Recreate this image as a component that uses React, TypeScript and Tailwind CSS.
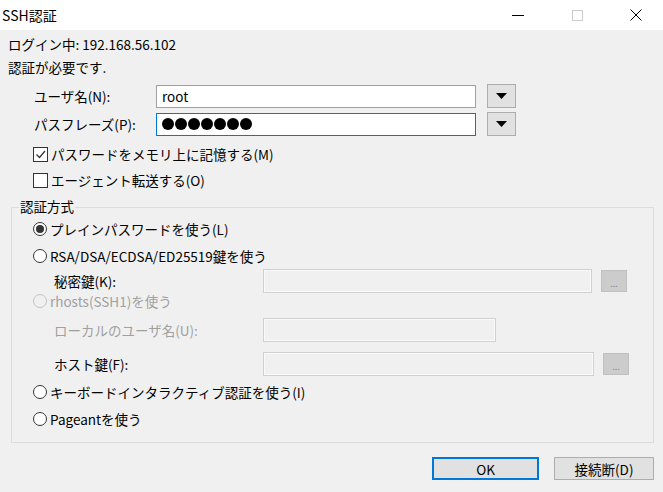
import React from 'react';

const font = '[font-family:"Noto_Sans_CJK_JP","Noto_Sans",sans-serif]';

function Radio({ checked = false, disabled = false }: { checked?: boolean; disabled?: boolean }) {
  return (
    <span
      className={`flex h-[14px] w-[14px] shrink-0 items-center justify-center rounded-full border ${
        disabled ? 'border-[#c4c4c4] bg-[#f0f0f0]' : 'border-[#333333] bg-white'
      }`}
    >
      {checked && <span className="h-[8px] w-[8px] rounded-full bg-[#333333]" />}
    </span>
  );
}

function Check({ checked = false }: { checked?: boolean }) {
  return (
    <span className="flex h-[15px] w-[15px] shrink-0 items-center justify-center border border-[#333333] bg-white">
      {checked && (
        <svg viewBox="0 0 13 13" className="h-[13px] w-[13px]">
          <polyline points="2.5,6.5 5.5,9.5 11,3" fill="none" stroke="#333333" strokeWidth="1.3" />
        </svg>
      )}
    </span>
  );
}

function DropButton() {
  return (
    <div className="ml-[11px] flex h-[24px] w-[29px] items-center justify-center border border-[#adadad] bg-[#e1e1e1]">
      <svg viewBox="0 0 11 6" className="h-[6px] w-[11px]">
        <polygon points="0,0 11,0 5.5,6" fill="#000000" />
      </svg>
    </div>
  );
}

function DotsButton() {
  return (
    <div className="ml-[9px] flex h-[22px] w-[26px] items-end justify-center border border-[#c0c0c0] bg-[#cccccc] pb-[3px] text-[9px] leading-[9px] text-[#8a8a8a]">
      ...
    </div>
  );
}

export default function App() {
  return (
    <div className={`h-[492px] w-[663px] overflow-hidden bg-[#f0f0f0] text-[13.5px] text-black ${font}`}>
      {/* title bar */}
      <div className="flex h-[30px] items-center bg-white pr-[21px]">
        <span className="pl-[2px] text-[14px] leading-[18px]">SSH認証</span>
        <div className="ml-auto h-[1px] w-[12px] bg-black" />
        <div className="ml-[48px] h-[11px] w-[11px] border border-[#cccccc]" />
        <svg viewBox="0 0 12 12" className="ml-[47px] h-[12px] w-[12px]">
          <path d="M0.5 0.5 L11.5 11.5 M11.5 0.5 L0.5 11.5" stroke="#000000" strokeWidth="1" />
        </svg>
      </div>

      <div className="pl-[8px] pt-[5px]">
        <div className="h-[18px] leading-[18px]">ログイン中: 192.168.56.102</div>
        <div className="mt-[5px] h-[18px] leading-[18px]">認証が必要です.</div>

        <div className="mt-[8px] flex h-[24px] items-center">
          <span className="w-[148px] pl-[26px] leading-[18px]">ユーザ名(N):</span>
          <div className="flex h-[23px] w-[320px] items-center border border-[#a0a0a0] bg-white px-[5px] leading-[18px]">
            root
          </div>
          <DropButton />
        </div>

        <div className="mt-[4px] flex h-[24px] items-center">
          <span className="w-[148px] pl-[26px] leading-[18px]">パスフレーズ(P):</span>
          <div className="flex h-[23px] w-[320px] items-center gap-[1px] border border-[#0078d7] bg-white px-[5px]">
            {[0, 1, 2, 3, 4, 5, 6].map((i) => (
              <span key={i} className="h-[12px] w-[12px] rounded-full bg-black" />
            ))}
          </div>
          <DropButton />
        </div>

        <div className="mt-[10px] flex h-[16px] items-center gap-[3px] pl-[25px]">
          <Check checked />
          <span className="leading-[18px]">パスワードをメモリ上に記憶する(M)</span>
        </div>
        <div className="mt-[10px] flex h-[16px] items-center gap-[3px] pl-[25px]">
          <Check />
          <span className="leading-[18px]">エージェント転送する(O)</span>
        </div>

        {/* group */}
        <div className="relative ml-[3px] mt-[19px] w-[643px] border border-[#dcdcdc] pb-[15px] pl-[21px] pt-[13px]">
          <span className="absolute -top-[11px] left-[7px] bg-[#f0f0f0] px-[1px] leading-[18px]">認証方式</span>

          <div className="flex h-[16px] items-center gap-[3px]">
            <Radio checked />
            <span className="leading-[18px]">プレインパスワードを使う(L)</span>
          </div>
          <div className="mt-[11px] flex h-[16px] items-center gap-[3px]">
            <Radio />
            <span className="leading-[18px]">RSA/DSA/ECDSA/ED25519鍵を使う</span>
          </div>
          <div className="mt-[5px] flex h-[24px] items-center">
            <span className="w-[230px] pl-[21px] leading-[18px]">秘密鍵(K):</span>
            <div className="h-[24px] w-[329px] border border-[#d0d0d0] bg-[#f0f0f0] shadow-[inset_0_0_0_1px_#fafafa]" />
            <DotsButton />
          </div>
          <div className="flex h-[16px] items-center gap-[3px] text-[#a0a0a0]">
            <Radio disabled />
            <span className="leading-[18px]">rhosts(SSH1)を使う</span>
          </div>
          <div className="mt-[9px] flex h-[24px] items-center text-[#a0a0a0]">
            <span className="w-[230px] pl-[21px] leading-[18px]">ローカルのユーザ名(U):</span>
            <div className="h-[24px] w-[233px] border border-[#d0d0d0] bg-[#f0f0f0] shadow-[inset_0_0_0_1px_#fafafa]" />
          </div>
          <div className="mt-[10px] flex h-[24px] items-center">
            <span className="w-[230px] pl-[21px] leading-[18px]">ホスト鍵(F):</span>
            <div className="h-[24px] w-[331px] border border-[#d0d0d0] bg-[#f0f0f0] shadow-[inset_0_0_0_1px_#fafafa]" />
            <DotsButton />
          </div>
          <div className="mt-[8px] flex h-[16px] items-center gap-[3px]">
            <Radio />
            <span className="leading-[18px]">キーボードインタラクティブ認証を使う(I)</span>
          </div>
          <div className="mt-[11px] flex h-[16px] items-center gap-[3px]">
            <Radio />
            <span className="leading-[18px]">Pageantを使う</span>
          </div>
        </div>

        <div className="mt-[14px] flex justify-end gap-[15px] pr-[9px]">
          <button className="flex h-[23px] w-[107px] items-center justify-center border-2 border-[#0078d7] bg-[#e1e1e1] leading-[18px]">
            OK
          </button>
          <button className="flex h-[23px] w-[100px] items-center justify-center border border-[#adadad] bg-[#e1e1e1] leading-[18px]">
            接続断(D)
          </button>
        </div>
      </div>
    </div>
  );
}
